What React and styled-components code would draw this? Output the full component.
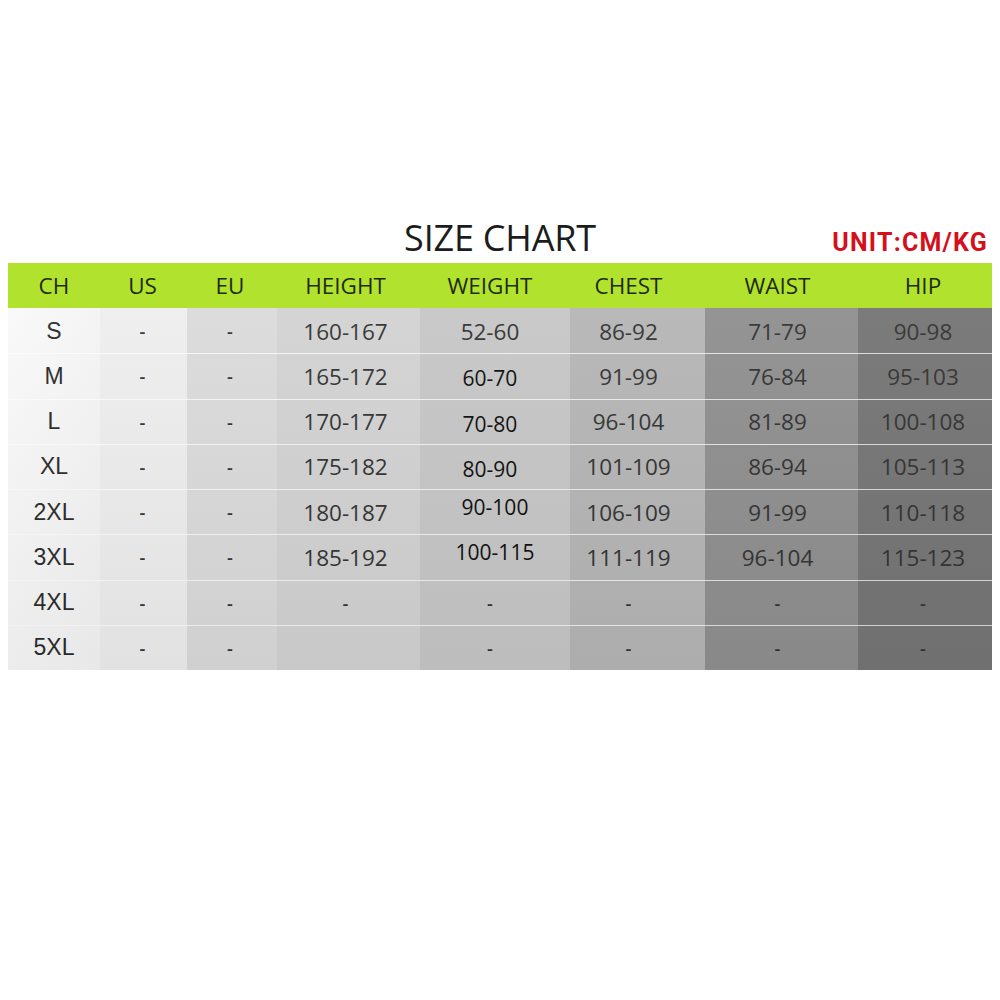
import React from 'react'
import styled, { createGlobalStyle } from 'styled-components'

//---------------------------------------------
//   Data
//---------------------------------------------
const columns = [
  { key: 'ch', label: 'CH', width: 92, bg: '#f4f4f4', from: '#f9f9f9' },
  { key: 'us', label: 'US', width: 87, bg: '#eeeeee' },
  { key: 'eu', label: 'EU', width: 90, bg: '#dbdbdb' },
  { key: 'height', label: 'HEIGHT', width: 143, bg: '#d3d3d3' },
  { key: 'weight', label: 'WEIGHT', width: 150, bg: '#c7c7c7' },
  { key: 'chest', label: 'CHEST', width: 135, bg: '#b6b6b6' },
  { key: 'waist', label: 'WAIST', width: 153, bg: '#909090' },
  { key: 'hip', label: 'HIP', width: 134, bg: '#767676' },
]

// weight cells: [text, dark?, raised?]
const rows = [
  ['S', '-', '-', '160-167', ['52-60'], '86-92', '71-79', '90-98'],
  ['M', '-', '-', '165-172', ['60-70', true], '91-99', '76-84', '95-103'],
  ['L', '-', '-', '170-177', ['70-80', true], '96-104', '81-89', '100-108'],
  ['XL', '-', '-', '175-182', ['80-90', true], '101-109', '86-94', '105-113'],
  ['2XL', '-', '-', '180-187', ['90-100', true, true], '106-109', '91-99', '110-118'],
  ['3XL', '-', '-', '185-192', ['100-115', true, true], '111-119', '96-104', '115-123'],
  ['4XL', '-', '-', '-', ['-'], '-', '-', '-'],
  ['5XL', '-', '-', '', ['-'], '-', '-', '-'],
]

//---------------------------------------------
//   Styles
//---------------------------------------------
const GlobalStyle = createGlobalStyle`
  html, body {
    margin: 0;
    padding: 0;
    background: #ffffff;
  }
`

const Page = styled.div`
  width: 1000px;
  height: 1000px;
  padding: 216px 8px 0;
  box-sizing: border-box;
  font-family: "Open Sans", "Noto Sans", sans-serif;
`

const TitleBar = styled.div`
  display: grid;
  grid-template-columns: 1fr auto 1fr;
  align-items: baseline;
  height: 44px;
  margin-bottom: 3px;
`

const Title = styled.h1`
  grid-column: 2;
  margin: 0;
  font-size: 36px;
  font-weight: 400;
  line-height: 44px;
  color: #1c1c1c;
  letter-spacing: -0.2px;
`

const Unit = styled.span`
  justify-self: end;
  margin-right: 4px;
  font-family: Roboto, "Liberation Sans", sans-serif;
  font-weight: 700;
  font-size: 25px;
  letter-spacing: 1.2px;
  color: #d3101c;
`

const Table = styled.div`
  display: grid;
  grid-template-columns: ${columns.map((c) => `${c.width}px`).join(' ')};
  position: relative;
`

const HeadCell = styled.div`
  height: 45px;
  background: #b1e32e;
  display: flex;
  align-items: center;
  justify-content: center;
  padding-right: ${(p) => p.$nudge || 0}px;
  font-size: 22.5px;
  color: #1f2a10;
`

const Cell = styled.div`
  height: 44.25px;
  border-top: 1px solid ${(p) => (p.$first ? 'transparent' : 'rgba(255,255,255,0.75)')};
  background: ${(p) => (p.$from ? `linear-gradient(to right, ${p.$from}, ${p.$bg})` : p.$bg)};
  display: flex;
  align-items: center;
  justify-content: center;
  padding-right: ${(p) => p.$nudge || 0}px;
  font-size: 22.5px;
  color: #333333;
`

const SizeLabel = styled.span`
  font-family: "Liberation Sans", Arial, sans-serif;
  font-size: 23px;
  color: #2b2b2b;
`

const Dash = styled.span`
  font-size: 18px;
  font-weight: 600;
  color: #333;
`

const WeightText = styled.span`
  color: ${(p) => (p.$dark ? '#0e0e0e' : '#333333')};
  font-size: ${(p) => (p.$dark ? '21px' : '22.5px')};
  margin-top: ${(p) => (p.$raised ? '-10px' : p.$dark ? '4px' : '0')};
  margin-left: ${(p) => (p.$raised ? '10px' : '0')};
`

const Shade = styled.div`
  position: absolute;
  left: 0;
  right: 0;
  top: 45px;
  bottom: 0;
  background: linear-gradient(to bottom, rgba(255,255,255,0.04), rgba(0,0,0,0.05));
  pointer-events: none;
`

const nudges = { ch: 0, us: 2, eu: 4, height: 6, weight: 10, chest: 18, waist: 8, hip: 4 }

//---------------------------------------------
//   Component
//---------------------------------------------
const renderValue = (col, value) => {
  if (col.key === 'ch') return <SizeLabel>{value}</SizeLabel>
  if (col.key === 'weight') {
    const [text, dark, raised] = value
    if (text === '-') return <Dash>-</Dash>
    return <WeightText $dark={dark} $raised={raised}>{text}</WeightText>
  }
  if (value === '-') return <Dash>-</Dash>
  return value
}

const App = () => {
  return (
    <>
      <GlobalStyle />
      <Page>
        <TitleBar>
          <Title>SIZE CHART</Title>
          <Unit>UNIT:CM/KG</Unit>
        </TitleBar>
        <Table>
          {columns.map((c) => (
            <HeadCell key={c.key} $nudge={nudges[c.key]}>{c.label}</HeadCell>
          ))}
          {rows.map((row, r) =>
            columns.map((c, i) => (
              <Cell
                key={`${r}-${c.key}`}
                $first={r === 0}
                $bg={c.bg}
                $from={c.from}
                $nudge={nudges[c.key]}
              >
                {renderValue(c, row[i])}
              </Cell>
            ))
          )}
          <Shade />
        </Table>
      </Page>
    </>
  )
}

export default App
